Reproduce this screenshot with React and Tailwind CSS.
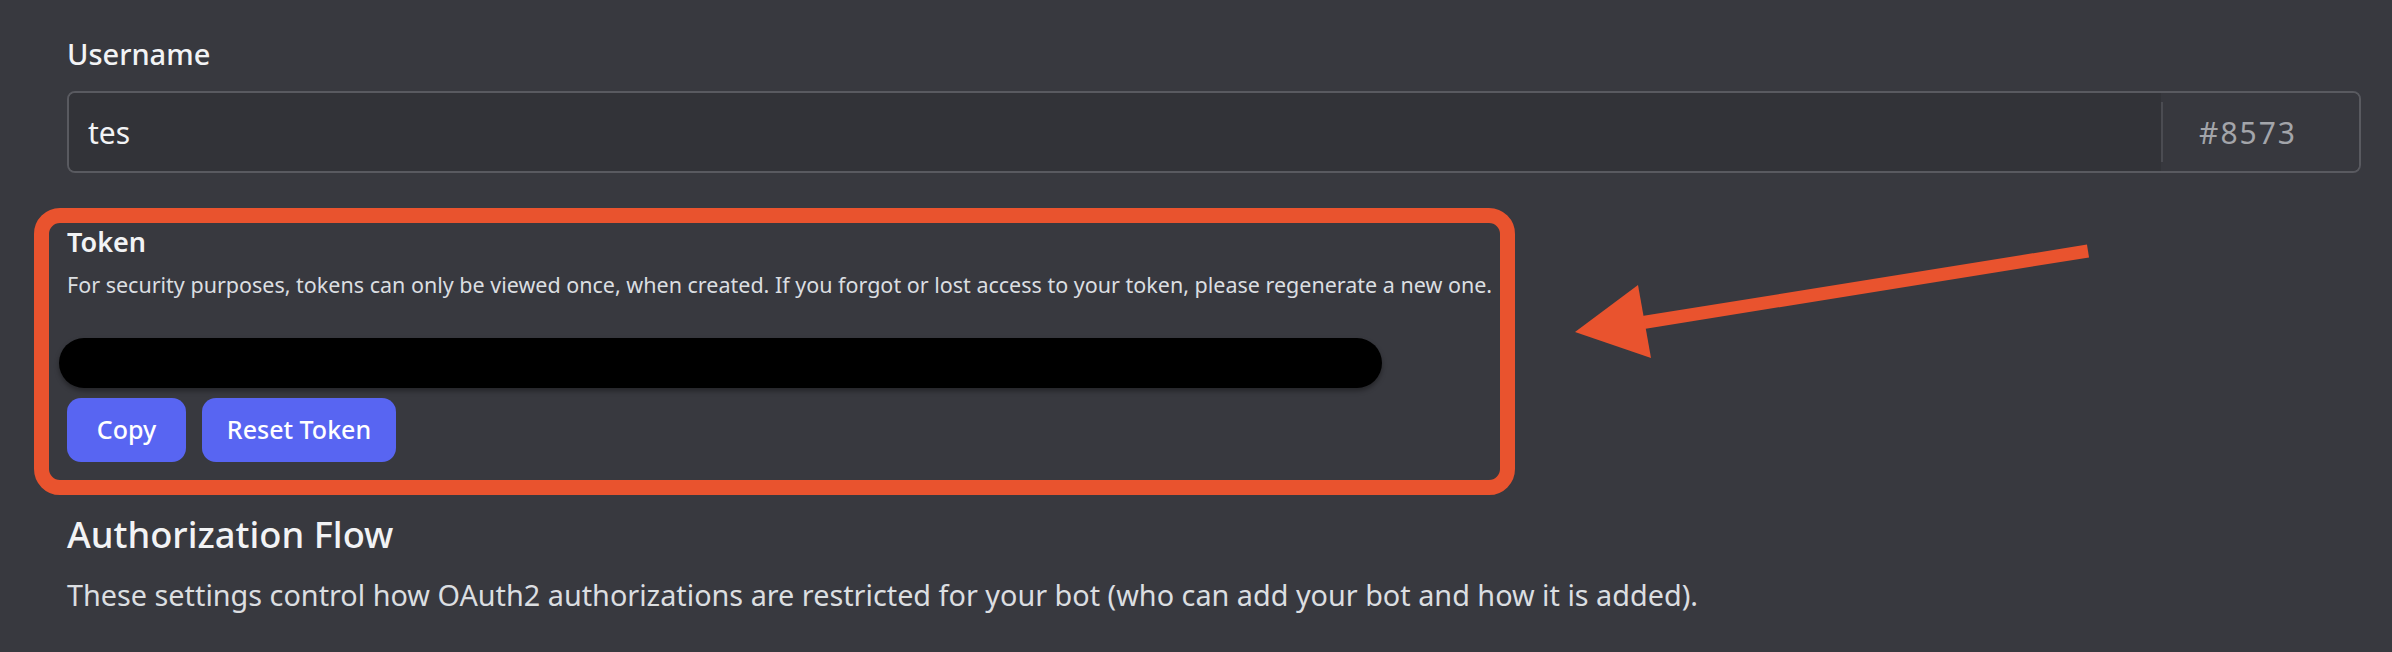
import React from "react";

const font = { fontFamily: "'Noto Sans', 'Open Sans', sans-serif" };

const ArrowMark = () => (
  <svg
    className="absolute left-[1560px] top-[235px]"
    width="540"
    height="135"
    viewBox="0 0 540 135"
  >
    <line x1="528" y1="16" x2="80" y2="88" stroke="#e9532e" strokeWidth="13" />
    <polygon points="15,97 78,50 91,123" fill="#e9532e" />
  </svg>
);

const App = () => {
  return (
    <div
      className="relative w-[2392px] h-[652px] overflow-hidden bg-[#38393f] text-white pl-[67px] pr-[31px] pt-[36px]"
      style={font}
    >
      <p className="text-[29px] leading-[36px] font-medium text-[#f2f3f5]">Username</p>

      <div className="mt-[19px] flex h-[82px] rounded-[8px] border-2 border-[#595a60] overflow-hidden">
        <div className="flex-1 flex items-center bg-[#323338] pl-[19px] text-[30px] text-[#f2f3f5]">
          tes
        </div>
        <div className="flex items-center bg-[#37383e] w-[198px]">
          <div className="w-[2px] h-[60px] bg-[#4b4c52]" />
          <span className="pl-[36px] text-[30px] tracking-[2px] text-[#a3a5aa]">#8573</span>
        </div>
      </div>

      <section className="mt-[35px] -ml-[33px] w-[1481px] rounded-[26px] border-[15px] border-[#e9532e] pl-[18px] pr-[10px] pt-[2px] pb-[18px]">
        <p className="text-[27px] leading-[34px] font-semibold text-[#f2f3f5]">Token</p>
        <p className="mt-[12px] whitespace-nowrap text-[21.5px] leading-[28px] text-[#dbdee1]">
          For security purposes, tokens can only be viewed once, when created. If you forgot or lost access to your token, please regenerate a new one.
        </p>
        <div className="mt-[39px] -ml-[8px] w-[1323px] h-[50px] rounded-full bg-black shadow-[0_3px_5px_rgba(0,0,0,0.35)]" />
        <div className="mt-[10px] flex gap-[16px]">
          <button className="h-[64px] w-[119px] rounded-[14px] bg-[#5865f2] text-[25px] font-medium text-white">
            Copy
          </button>
          <button className="h-[64px] w-[194px] rounded-[14px] bg-[#5865f2] text-[25px] font-medium text-white">
            Reset Token
          </button>
        </div>
      </section>

      <h2 className="mt-[17px] text-[36.3px] leading-[44px] font-medium text-[#f2f3f5]">Authorization Flow</h2>
      <p className="mt-[21px] whitespace-nowrap text-[28.8px] leading-[36px] text-[#dbdee1]">
        These settings control how OAuth2 authorizations are restricted for your bot (who can add your bot and how it is added).
      </p>

      <ArrowMark />
    </div>
  );
};

export default App;
